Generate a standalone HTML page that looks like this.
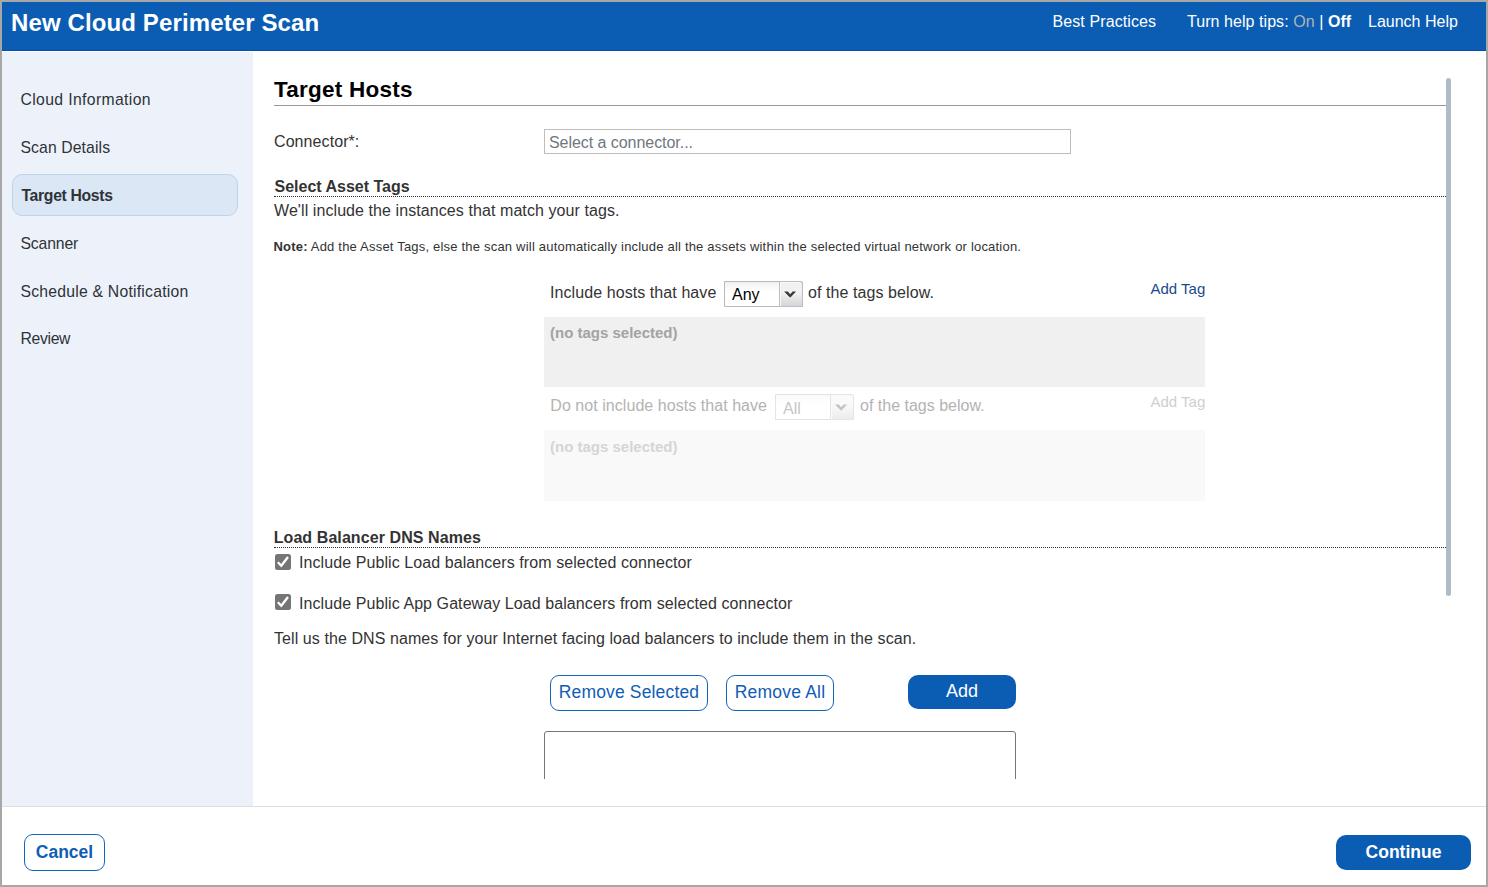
<!DOCTYPE html>
<html><head><meta charset="utf-8">
<style>
*{margin:0;padding:0;box-sizing:border-box}
html,body{width:1488px;height:887px;overflow:hidden;background:#fff}
body{font-family:"Liberation Sans",sans-serif;position:relative;color:#333}
.a{position:absolute;white-space:nowrap}
#frame{position:absolute;left:0;top:0;width:1488px;height:887px;border:2px solid #a7a7a7;pointer-events:none;z-index:50}
#hdr{position:absolute;left:0;top:0;width:1488px;height:51px;background:#0b5db3;border-bottom:1px solid #0650a9}
#side{position:absolute;left:2px;top:52px;width:251px;height:754px;background:#edf2fa;border-right:1px solid #e9f0fa}
#foot{position:absolute;left:0;top:806px;width:1488px;height:1px;background:#dedede}
.t15{font-size:15.75px;line-height:15px;color:#2e3338}
.t16{font-size:16px;line-height:16px;color:#333;letter-spacing:0.08px}
.lnk{font-size:16px;line-height:16px;color:#fff}
.sel{position:absolute;border:1px solid #b8b8b8;border-radius:0 3px 0 0;background:linear-gradient(#eef1f2,#fff 40%)}
.sel .arr{position:absolute;top:-1px;right:-1px;bottom:-1px;width:24px;border:1px solid #bdbdbd;border-bottom-color:#b9c0d4;border-radius:0 3px 0 0;background:linear-gradient(#f1f1f1 45%,#d5d5d5);box-shadow:inset 1px 1px 0 #fafafa}
.btn-o{position:absolute;border:1px solid #1565be;border-radius:9px;background:#fff;color:#0f5db5;font-size:17.5px;text-align:center}
.btn-f{position:absolute;border-radius:10px;background:#0b5db3;color:#fff;text-align:center}
.cb{position:absolute;width:16px;height:16px;background:#757575;border-radius:2.5px}
.dot{position:absolute;height:1px;background-image:linear-gradient(to right,#2a2a2a 50%,transparent 50%);background-size:2px 1px}
</style></head><body>
<div id="hdr"></div>
<div class="a" style="left:11px;top:11px;font-size:24px;line-height:24px;font-weight:700;color:#fff;letter-spacing:0.12px">New Cloud Perimeter Scan</div>
<div class="a lnk" style="left:1052.5px;top:14px;letter-spacing:0.1px">Best Practices</div>
<div class="a lnk" style="left:1187px;top:14px;letter-spacing:0.06px">Turn help tips: <span style="color:#b3b3b3">On</span> | <b>Off</b></div>
<div class="a lnk" style="left:1368px;top:14px">Launch Help</div>

<div id="side"></div>
<div style="position:absolute;left:12px;top:174px;width:226px;height:42px;background:#dbe7f5;border:1px solid #bcd3ed;border-radius:10px"></div>
<div class="a t15" style="left:20.5px;top:92px;letter-spacing:0.36px">Cloud Information</div>
<div class="a t15" style="left:20.5px;top:140px;letter-spacing:0.1px">Scan Details</div>
<div class="a t15" style="left:21.5px;top:187.5px;font-weight:700;letter-spacing:-0.33px">Target Hosts</div>
<div class="a t15" style="left:20.5px;top:236px;letter-spacing:-0.15px">Scanner</div>
<div class="a t15" style="left:20.5px;top:284px;letter-spacing:0.22px">Schedule &amp; Notification</div>
<div class="a t15" style="left:20.5px;top:331px;letter-spacing:-0.33px">Review</div>

<div id="foot"></div>

<!-- main content -->
<div id="main" style="position:absolute;left:253px;top:52px;width:1233px;height:727px;overflow:hidden">
 <div style="position:absolute;left:-253px;top:-52px;width:1488px;height:887px">
  <div class="a" style="left:274px;top:78.5px;font-size:22.5px;line-height:22px;font-weight:700;color:#000;letter-spacing:0.25px">Target Hosts</div>
  <div style="position:absolute;left:274px;top:105px;width:1172px;height:1px;background:#999"></div>
  <div class="a t16" style="left:274px;top:134px">Connector*:</div>
  <div style="position:absolute;left:544px;top:129px;width:527px;height:25px;border:1px solid #bdbdbd;background:#fff"></div>
  <div class="a" style="left:549px;top:135px;font-size:16px;line-height:16px;color:#6f7780;letter-spacing:-0.05px">Select a connector...</div>

  <div class="a t16" style="left:274.5px;top:179px;font-weight:700;letter-spacing:0">Select Asset Tags</div>
  <div style="position:absolute;left:274px;top:196px;width:1px;height:1px;background:#2a2a2a"></div><div class="dot" style="left:275px;top:196px;width:1171px"></div>
  <div class="a t16" style="left:274px;top:203px">We'll include the instances that match your tags.</div>
  <div class="a" style="left:273.5px;top:239.5px;font-size:13px;line-height:13px;color:#333;letter-spacing:0.2px"><b>Note:</b> Add the Asset Tags, else the scan will automatically include all the assets within the selected virtual network or location.</div>

  <div class="a t16" style="left:550px;top:285px">Include hosts that have</div>
  <div class="sel" style="left:724px;top:281px;width:79px;height:26px"><div class="arr"><svg width="24" height="26" style="position:absolute;left:-1px;top:-1px"><polygon points="5,10.5 8.9,10.5 11.2,13.3 13.5,10.5 17.2,10.5 11.2,16.8" fill="none" stroke="#fff" stroke-width="1.6" stroke-linejoin="round" opacity="0.7"/><polygon points="5,10.5 8.9,10.5 11.2,13.3 13.5,10.5 17.2,10.5 11.2,16.8" fill="#3c3c3c"/></svg></div></div>
  <div class="a" style="left:732px;top:287px;font-size:16px;line-height:16px;color:#000">Any</div>
  <div class="a t16" style="left:808px;top:285px">of the tags below.</div>
  <div class="a" style="left:1150.5px;top:281px;font-size:15px;line-height:15px;color:#184b91">Add Tag</div>
  <div style="position:absolute;left:544px;top:317px;width:661px;height:70px;background:#f0f0f0"></div>
  <div class="a" style="left:550px;top:325px;font-size:15px;line-height:15px;font-weight:700;color:#a3a3a3">(no tags selected)</div>

  <div class="a" style="left:550.3px;top:398px;letter-spacing:0.05px;font-size:16px;line-height:16px;color:#b3b3b3">Do not include hosts that have</div>
  <div class="sel" style="left:775px;top:394px;width:79px;height:26px;border-color:#e3e3e3;background:linear-gradient(#f9fafa,#fff 40%)"><div class="arr" style="border-color:#e6e6e6;background:linear-gradient(#fafafa 40%,#ececec)"><svg width="24" height="26" style="position:absolute;left:-1px;top:-1px"><polygon points="5,10.5 8.9,10.5 11.2,13.3 13.5,10.5 17.2,10.5 11.2,16.8" fill="#c4c4c4"/></svg></div></div>
  <div class="a" style="left:783px;top:401px;font-size:16px;line-height:16px;color:#c6c6c6">All</div>
  <div class="a" style="left:860px;top:398px;font-size:16px;line-height:16px;color:#b3b3b3">of the tags below.</div>
  <div class="a" style="left:1150.5px;top:394px;font-size:15px;line-height:15px;color:#cfcfcf">Add Tag</div>
  <div style="position:absolute;left:544px;top:430px;width:661px;height:71px;background:#f9f9f9"></div>
  <div class="a" style="left:550px;top:439px;font-size:15px;line-height:15px;font-weight:700;color:#d5d5d5">(no tags selected)</div>

  <div class="a t16" style="left:273.7px;top:530px;font-weight:700;letter-spacing:0.08px">Load Balancer DNS Names</div>
  <div style="position:absolute;left:274px;top:547px;width:1px;height:1px;background:#2a2a2a"></div><div class="dot" style="left:275px;top:547px;width:1171px"></div>
  <div class="cb" style="left:275px;top:554px"><svg width="16" height="16"><polyline points="2.8,8.3 6.3,11.7 13,3" fill="none" stroke="#fff" stroke-width="2.3"/></svg></div>
  <div class="a t16" style="left:299px;top:555px">Include Public Load balancers from selected connector</div>
  <div class="cb" style="left:275px;top:594px"><svg width="16" height="16"><polyline points="2.8,8.3 6.3,11.7 13,3" fill="none" stroke="#fff" stroke-width="2.3"/></svg></div>
  <div class="a t16" style="left:299px;top:596px">Include Public App Gateway Load balancers from selected connector</div>
  <div class="a t16" style="left:274px;top:631px">Tell us the DNS names for your Internet facing load balancers to include them in the scan.</div>

  <div class="btn-o" style="left:550px;top:675px;width:158px;height:36px;line-height:33px;letter-spacing:0.15px">Remove Selected</div>
  <div class="btn-o" style="left:726px;top:675px;width:108px;height:36px;line-height:33px;letter-spacing:0.2px">Remove All</div>
  <div class="btn-f" style="left:908px;top:675px;width:108px;height:34px;line-height:32px;font-size:18px">Add</div>
  <div style="position:absolute;left:544px;top:731px;width:472px;height:80px;border:1px solid #767676;border-radius:3px"></div>
 </div>
</div>
<div style="position:absolute;left:1446px;top:78px;width:5px;height:518px;background:#adbcc6;border-radius:3px"></div>

<div class="btn-o" style="left:24px;top:834px;width:81px;height:37px;line-height:35px;font-size:17.5px;font-weight:700">Cancel</div>
<div class="btn-f" style="left:1336px;top:835px;width:135px;height:35px;line-height:35px;font-size:17.5px;font-weight:700">Continue</div>

<div id="frame"></div>
</body></html>
